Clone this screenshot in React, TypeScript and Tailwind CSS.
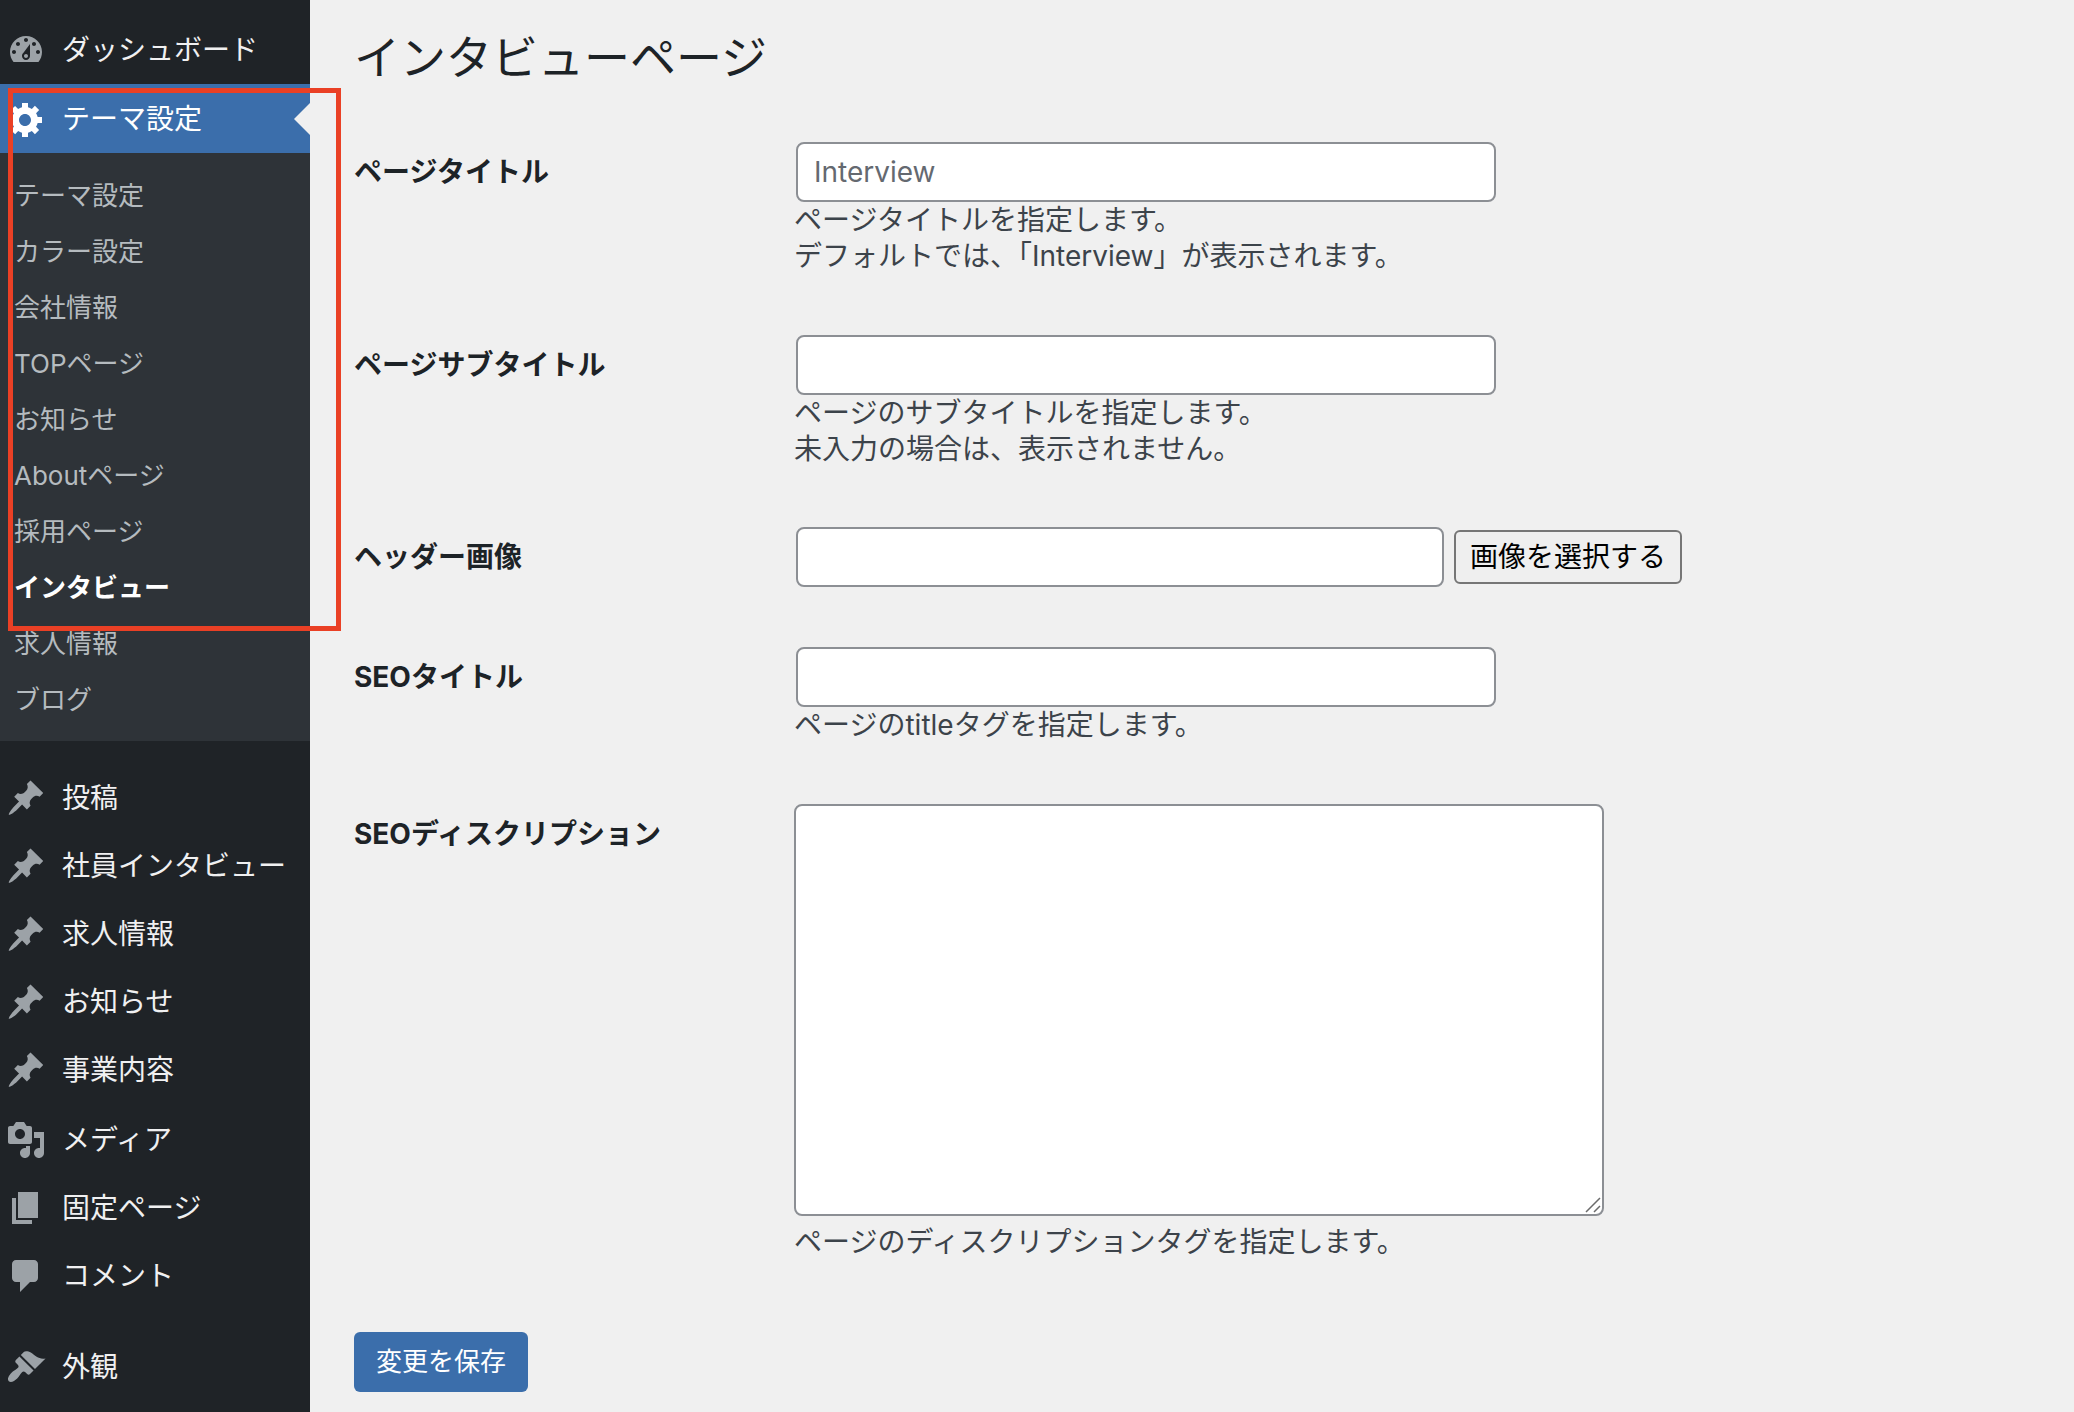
import React from 'react';

interface MenuItem {
  label: string;
  icon: string;
}

const icons = {
  dashboard:
    'M3.76 16h12.48c1.1-1.37 1.76-3.11 1.76-5 0-4.42-3.58-8-8-8s-8 3.58-8 8c0 1.89.66 3.63 1.76 5zM10 4c.55 0 1 .45 1 1s-.45 1-1 1-1-.45-1-1 .45-1 1-1zM6 6c.55 0 1 .45 1 1s-.45 1-1 1-1-.45-1-1 .45-1 1-1zm8 0c.55 0 1 .45 1 1s-.45 1-1 1-1-.45-1-1 .45-1 1-1zm-5.37 5.55L12 7v6c0 1.1-.9 2-2 2s-2-.9-2-2c0-.57.24-1.08.63-1.45zM4 10c.55 0 1 .45 1 1s-.45 1-1 1-1-.45-1-1 .45-1 1-1zm12 0c.55 0 1 .45 1 1s-.45 1-1 1-1-.45-1-1 .45-1 1-1zm-5 3c0-.55-.45-1-1-1s-1 .45-1 1 .45 1 1 1 1-.45 1-1z',
  generic:
    'M18 12h-2.18c-.17.7-.44 1.35-.81 1.93l1.54 1.54-2.1 2.1-1.54-1.54c-.58.36-1.23.63-1.91.79V19H8v-2.18c-.68-.16-1.33-.43-1.91-.79l-1.54 1.54-2.12-2.12 1.54-1.54c-.36-.58-.63-1.23-.79-1.91H1V9.03h2.17c.16-.7.44-1.35.8-1.94L2.43 5.55l2.1-2.1 1.54 1.54c.58-.37 1.24-.64 1.93-.81V2h3v2.18c.68.16 1.33.43 1.91.79l1.54-1.54 2.12 2.12-1.54 1.54c.36.59.64 1.24.8 1.94H18V12zm-8.5 1.5c1.66 0 3-1.34 3-3s-1.34-3-3-3-3 1.34-3 3 1.34 3 3 3z',
  pin: 'M10.44 3.02l1.82-1.82 6.36 6.35-1.83 1.82c-1.05-.68-2.48-.57-3.41.36l-.75.75c-.92.93-1.04 2.35-.35 3.41l-1.83 1.82-2.41-2.41-2.8 2.79c-.42.42-3.38 2.71-3.8 2.29s1.86-3.39 2.28-3.81l2.79-2.79L4.1 9.36l1.83-1.82c1.05.69 2.48.57 3.4-.36l.75-.75c.93-.92 1.05-2.35.36-3.41z',
  media:
    'M13 11V4c0-.55-.45-1-1-1h-1.67L9 1H5L3.67 3H2c-.55 0-1 .45-1 1v7c0 .55.45 1 1 1h10c.55 0 1-.45 1-1zM7 4.5c1.38 0 2.5 1.12 2.5 2.5S8.38 9.5 7 9.5 4.5 8.38 4.5 7 5.62 4.5 7 4.5zM14 6h5v10.5c0 1.38-1.12 2.5-2.5 2.5S14 17.88 14 16.5s1.12-2.5 2.5-2.5c.17 0 .34.02.5.05V9h-3V6zm-4 8.05V13h2v3.5c0 1.38-1.12 2.5-2.5 2.5S7 17.88 7 16.5 8.12 14 9.5 14c.17 0 .34.02.5.05z',
  page: 'M6 15V2h10v13H6zm-1 1h8v2H3V5h2v11z',
  comment:
    'M5 2h9c1.1 0 2 .9 2 2v7c0 1.1-.9 2-2 2h-2l-5 5v-5H5c-1.1 0-2-.9-2-2V4c0-1.1.9-2 2-2z',
  brush:
    'M14.48 11.06L7.41 3.99l1.5-1.5c.5-.56 2.3-.47 3.51.32 1.21.8 1.43 1.28 2.91 2.1 1.18.64 2.45 1.26 4.45.85zm-.71.71L6.7 4.7 4.93 6.47c-.39.39-.39 1.02 0 1.41l1.06 1.06c.39.39.39 1.03 0 1.42-.6.6-1.43 1.11-2.21 1.69-.35.26-.7.53-1.01.84C1.43 14.23.4 16.08 1.4 17.07c.99 1 2.84-.03 4.18-1.36.31-.31.58-.66.85-1.02.57-.78 1.08-1.61 1.69-2.21.39-.39 1.02-.39 1.41 0l1.06 1.06c.39.39 1.02.39 1.41 0z',
};

const submenu = [
  'テーマ設定',
  'カラー設定',
  '会社情報',
  'TOPページ',
  'お知らせ',
  'Aboutページ',
  '採用ページ',
  'インタビュー',
  '求人情報',
  'ブログ',
];

const postTypes: MenuItem[] = [
  { label: '投稿', icon: icons.pin },
  { label: '社員インタビュー', icon: icons.pin },
  { label: '求人情報', icon: icons.pin },
  { label: 'お知らせ', icon: icons.pin },
  { label: '事業内容', icon: icons.pin },
];

const siteContent: MenuItem[] = [
  { label: 'メディア', icon: icons.media },
  { label: '固定ページ', icon: icons.page },
  { label: 'コメント', icon: icons.comment },
];

const inputClass =
  'block h-[60px] max-w-full rounded-lg border-2 border-[#8c8f94] bg-white px-4 text-[28px] text-[#2c3338] placeholder:text-[#646970]';

const MenuLink: React.FC<MenuItem> = ({ label, icon }) => (
  <a href="#" className="flex h-[68px] items-center gap-4 pl-1.5 text-[28px] leading-9 text-[#f0f0f1]">
    <svg viewBox="0 0 20 20" className="size-10 shrink-0 fill-[#9ca2a7]" aria-hidden="true">
      <path d={icon} />
    </svg>
    {label}
  </a>
);

const Sidebar: React.FC = () => (
  <nav className="relative w-[310px] shrink-0 bg-[#1f2327] pt-4">
    <MenuLink label="ダッシュボード" icon={icons.dashboard} />

    <a
      href="#"
      className="relative flex h-[69px] items-center gap-4 bg-[#3b6eab] pl-1.5 text-[28px] leading-9 text-white"
    >
      <svg viewBox="0 0 20 20" className="size-10 shrink-0 fill-white" aria-hidden="true">
        <path d={icons.generic} />
      </svg>
      テーマ設定
      <span className="absolute top-1/2 right-0 -translate-y-1/2 border-y-16 border-r-16 border-y-transparent border-r-[#f0f0f0]" />
    </a>

    <ul className="bg-[#2e3338] pt-[15px] pb-[13px]">
      {submenu.map((label) => (
        <li key={label}>
          <a
            href="#"
            className={
              label === 'インタビュー'
                ? 'flex h-14 items-center pl-3.5 text-[26px] leading-9 font-bold text-white'
                : 'flex h-14 items-center pl-3.5 text-[26px] leading-9 text-[#b5bbbf]'
            }
          >
            {label}
          </a>
        </li>
      ))}
    </ul>

    <div className="mt-[23px]">
      {postTypes.map((item) => (
        <MenuLink key={item.label} {...item} />
      ))}
    </div>

    <div className="mt-0.5">
      {siteContent.map((item) => (
        <MenuLink key={item.label} {...item} />
      ))}
    </div>

    <div className="mt-[23px]">
      <MenuLink label="外観" icon={icons.brush} />
    </div>

    {/* highlight frame around the theme settings menu */}
    <div className="pointer-events-none absolute top-[88px] left-2 h-[543px] w-[333px] border-5 border-[#ea4025]" />
  </nav>
);

interface FieldProps {
  id: string;
  label: string;
  children: React.ReactNode;
}

const Field: React.FC<FieldProps> = ({ id, label, children }) => (
  <div className="flex items-start">
    <label htmlFor={id} className="w-[440px] shrink-0 py-3 text-[28px] leading-9 font-bold text-[#1d2327]">
      {label}
    </label>
    <div className="min-w-0 flex-1 text-[28px] leading-9 text-[#3c434a]">{children}</div>
  </div>
);

export default function App() {
  return (
    <div className="flex min-h-screen bg-[#f0f0f0] font-[Inter,'Noto_Sans_CJK_JP',sans-serif]">
      <Sidebar />

      <main className="min-w-0 flex-1 pt-[27px] pr-10 pl-11">
        <h1 className="text-[46px] leading-[60px] text-[#1d2327]">インタビューページ</h1>

        <form className="mt-[55px]" onSubmit={(e) => e.preventDefault()}>
          <div className="space-y-[60px]">
            <Field id="page-title" label="ページタイトル">
              <div className="px-0.5">
                <input id="page-title" type="text" placeholder="Interview" className={`${inputClass} w-[700px]`} />
              </div>
              <p className="pb-px">
                ページタイトルを指定します。
                <br />
                デフォルトでは、「Interview」が表示されます。
              </p>
            </Field>

            <Field id="page-subtitle" label="ページサブタイトル">
              <div className="px-0.5">
                <input id="page-subtitle" type="text" className={`${inputClass} w-[700px]`} />
              </div>
              <p>
                ページのサブタイトルを指定します。
                <br />
                未入力の場合は、表示されません。
              </p>
            </Field>

            <Field id="header-image" label="ヘッダー画像">
              <div className="flex items-center gap-2.5 px-0.5">
                <input id="header-image" type="text" className={`${inputClass} w-[648px]`} />
                <button
                  type="button"
                  className="h-[54px] shrink-0 rounded-md border-2 border-[#767676] bg-[#efefef] px-3.5 text-[28px] leading-9 text-black"
                >
                  画像を選択する
                </button>
              </div>
            </Field>

            <Field id="seo-title" label="SEOタイトル">
              <div className="px-0.5">
                <input id="seo-title" type="text" className={`${inputClass} w-[700px]`} />
              </div>
              <p className="pb-px">ページのtitleタグを指定します。</p>
            </Field>

            <Field id="seo-description" label="SEOディスクリプション">
              <div className="relative w-[810px] max-w-full">
                <textarea
                  id="seo-description"
                  className="block h-[412px] w-full resize-none rounded-lg border-2 border-[#8c8f94] bg-white px-4 py-1 text-[#2c3338]"
                />
                <svg
                  viewBox="0 0 16 16"
                  className="pointer-events-none absolute right-[3px] bottom-[3px] size-4 stroke-[#6b6b6b]"
                  aria-hidden="true"
                >
                  <path d="M1 15L15 1M9 15l6-6" strokeWidth="1.5" />
                </svg>
              </div>
              <p className="mt-2">ページのディスクリプションタグを指定します。</p>
            </Field>
          </div>

          <button
            type="submit"
            className="mt-[72px] h-[60px] rounded-md bg-[#3b6eab] px-[22px] text-[26px] leading-9 text-white"
          >
            変更を保存
          </button>
        </form>
      </main>
    </div>
  );
}
